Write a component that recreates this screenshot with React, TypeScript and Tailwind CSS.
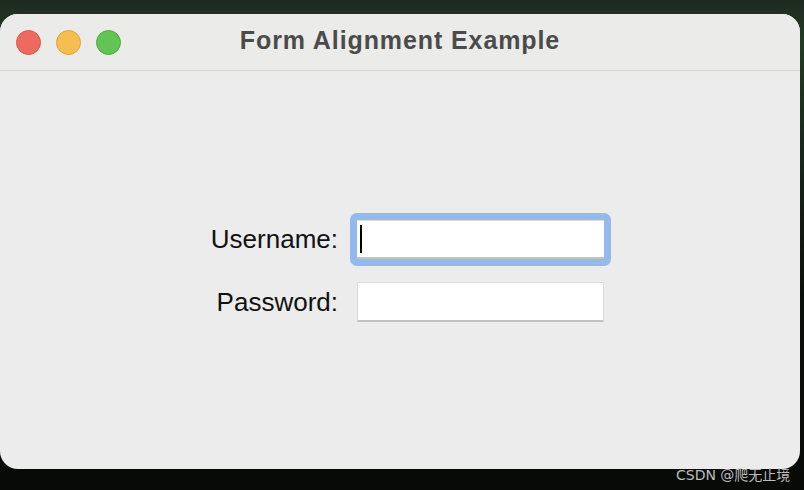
import React from 'react';

const sans = { fontFamily: '"Liberation Sans", Arial, sans-serif' };

function Lights() {
    return (
        <div className="flex items-center gap-[15px] pl-[16px]">
            <div className="w-[25px] h-[25px] rounded-full bg-[#ee6a5f] border border-[#d9574d]" />
            <div className="w-[25px] h-[25px] rounded-full bg-[#f6be50] border border-[#dea236]" />
            <div className="w-[25px] h-[25px] rounded-full bg-[#61c454] border border-[#4fa842]" />
        </div>
    );
}

export default function App() {
    return (
        <div className="relative w-[804px] h-[490px] overflow-hidden bg-[linear-gradient(180deg,#1d2a1f_0%,#243a26_8%,#0b0f0b_60%,#080a08_100%)] pt-[14px] pr-[4px]" style={sans}>
            {/* window */}
            <div className="h-[455px] bg-[#ececec] rounded-[18px] overflow-hidden flex flex-col">
                <div className="relative h-[57px] shrink-0 flex items-center border-b border-[#d2d2d2] bg-[#ebebea]">
                    <Lights />
                    <div className="absolute inset-0 flex items-center justify-center pb-[2px]">
                        <span className="text-[25px] font-bold text-[#4b4b4b] tracking-[0.9px]">Form Alignment Example</span>
                    </div>
                </div>
                <div className="flex-1 flex items-center">
                    <div className="grid grid-cols-[140px_247px] gap-x-[19px] gap-y-[23px] items-center ml-[198px] mt-[1px]">
                        <span className="text-[26px] text-[#111] text-right leading-none">Username:</span>
                        <div className="relative h-[39px]">
                            <div className="absolute -inset-[7px] rounded-[7px] bg-[#93b9ef]" />
                            <div className="relative h-full bg-white border-t border-[#dedede] border-b-2 border-b-[#c2c2c2] flex items-center pl-[3px]">
                                <div className="w-[2px] h-[28px] bg-black" />
                            </div>
                        </div>
                        <span className="text-[26px] text-[#111] text-right leading-none">Password:</span>
                        <div className="h-[40px] bg-white border border-[#dadada] border-b-2 border-b-[#c2c2c2]" />
                    </div>
                </div>
            </div>
            <span className="absolute left-[676px] top-[465px] text-[14px] text-[#bdbdbd]" style={{ fontFamily: '"DejaVu Sans", "Noto Sans CJK SC", sans-serif' }}>CSDN @爬无止境</span>
        </div>
    );
}
